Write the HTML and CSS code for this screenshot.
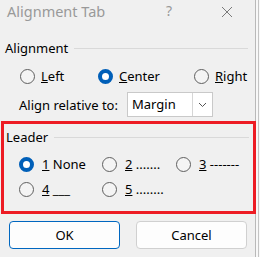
FILE: index.html
```html
<!DOCTYPE html>
<html lang="en">

<head>
    <meta charset="UTF-8">
    <meta name="viewport" content="width=device-width, initial-scale=1.0">
    <title>Alignment Tab</title>
    <link rel="stylesheet" href="styles.css">
</head>

<body>
    <div class="screen">
        <div class="dialog">
            <div class="titlebar">
                <span class="title">Alignment Tab</span>
                <span class="help">?</span>
                <svg class="close" width="12" height="12" viewBox="0 0 12 12">
                    <path d="M1 1 L11 11 M11 1 L1 11" stroke="#7a7a7a" stroke-width="1" fill="none" />
                </svg>
            </div>

            <div class="group-head">
                <span>Alignment</span>
                <div class="rule"></div>
            </div>
            <div class="align-row">
                <label class="radio"><span class="dot"></span><span><u>L</u>eft</span></label>
                <label class="radio"><span class="dot checked"></span><span><u>C</u>enter</span></label>
                <label class="radio"><span class="dot"></span><span><u>R</u>ight</span></label>
            </div>
            <div class="relative-row">
                <span class="relative-label">Align relative to:</span>
                <div class="select">
                    <span class="select-text">Margin</span>
                    <span class="select-btn">
                        <svg width="9" height="6" viewBox="0 0 9 6">
                            <path d="M1 1 L4.5 4.5 L8 1" stroke="#555" stroke-width="1" fill="none" />
                        </svg>
                    </span>
                </div>
            </div>

            <div class="leader">
                <div class="group-head leader-head">
                    <span>Leader</span>
                    <div class="rule"></div>
                </div>
                <div class="leader-grid">
                    <label class="radio"><span class="dot checked"></span><span><u>1</u> None</span></label>
                    <label class="radio"><span class="dot"></span><span><u>2</u> <span class="fill">.......</span></span></label>
                    <label class="radio"><span class="dot"></span><span><u>3</u> <span class="fill">-------</span></span></label>
                    <label class="radio"><span class="dot"></span><span><u>4</u> ___</span></label>
                    <label class="radio"><span class="dot"></span><span><u>5</u> <span class="fill">........</span></span></label>
                </div>
            </div>

            <div class="buttons">
                <button class="btn primary">OK</button>
                <button class="btn">Cancel</button>
            </div>
        </div>
        <div class="edge"></div>
    </div>
</body>

</html>
```

FILE: styles.css
```css
*{
    margin: 0;
    padding: 0;
    box-sizing: border-box;
}
body{
    background-color: #f8f8f8;
    font-family: "Noto Sans", "Open Sans", sans-serif;
    font-size: 12px;
    color: #000;
}
.screen {
    display: flex;
    width: 260px;
    height: 257px;
}
.dialog {
    width: 256px;
    height: 257px;
    background-color: #f0f0f0;
    border-right: 1px solid #b9b9b9;
}
.edge {
    width: 4px;
    border-right: 1px solid #c4c4c4;
    margin-right: 1px;
}

.titlebar {
    display: flex;
    align-items: flex-start;
    height: 40px;
    padding-left: 7px;
}
.title {
    font-size: 14.5px;
    line-height: 22px;
    color: #999;
    flex: 1;
}
.help {
    font-size: 14px;
    line-height: 22px;
    color: #999;
    margin-right: 49px;
}
.close {
    margin-top: 6px;
    margin-right: 22px;
}

.group-head {
    display: flex;
    align-items: center;
    height: 16px;
    padding-left: 5px;
    padding-right: 7px;
    font-size: 13px;
}
.group-head .rule {
    flex: 1;
    height: 1px;
    background-color: #d9d9d9;
    margin-left: 6px;
}

.radio {
    display: flex;
    align-items: center;
    gap: 6px;
    height: 24px;
    font-size: 13px;
}
.dot {
    width: 15px;
    height: 15px;
    border-radius: 50%;
    border: 1px solid #5f5f5f;
    background-color: #f4f4f4;
    flex-shrink: 0;
}
.dot.checked {
    border: 4.5px solid #005fb8;
    background-color: #fff;
}

.align-row {
    display: grid;
    grid-template-columns: 78px 96px 1fr;
    margin-top: 8px;
    padding-left: 20px;
}

.relative-row {
    display: flex;
    align-items: center;
    margin-top: 4px;
    padding-left: 19px;
    font-size: 13px;
}
.relative-label {
    width: 108px;
}
.select {
    display: flex;
    width: 86px;
    height: 25px;
    background-color: #fff;
    border: 1px solid #c9c9c9;
}
.select-text {
    flex: 1;
    line-height: 23px;
    padding-left: 4px;
}
.select-btn {
    width: 20px;
    border-left: 1px solid #d6d6d6;
    display: flex;
    align-items: center;
    justify-content: center;
}

.leader {
    margin: 4px 0 0 1px;
    width: 255px;
    border: 3px solid #ed1c24;
    padding: 5px 0 10px 0;
}
.leader-head {
    padding-left: 2px;
    padding-right: 4px;
}
.leader-grid {
    display: grid;
    grid-template-columns: 83px 74px 1fr;
    row-gap: 1px;
    margin-top: 7px;
    padding-left: 15px;
}
.leader-grid .radio {
    gap: 8px;
}

.buttons {
    display: flex;
    gap: 16px;
    margin-top: 7px;
    padding-left: 9px;
}
.btn {
    width: 111px;
    height: 28px;
    background-color: #fdfdfd;
    border: 1px solid #d0d0d0;
    border-radius: 4px;
    font-family: "Noto Sans", "Open Sans", sans-serif;
    font-size: 13px;
    color: #000;
}
.btn.primary {
    border-color: #0067c0;
}
```
